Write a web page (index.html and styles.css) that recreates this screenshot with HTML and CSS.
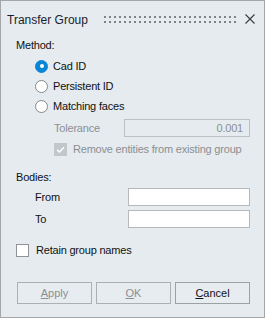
FILE: index.html
```html
<!DOCTYPE html>
<html>
<head>
<meta charset="utf-8">
<link rel="stylesheet" href="styles.css">
</head>
<body>
<div class="window">
  <div class="titlebar">
    <span class="title">Transfer Group</span>
    <svg class="grip" width="134" height="7" viewBox="0 0 134 7">
      <defs>
        <pattern id="dots" x="0" y="0" width="5" height="5" patternUnits="userSpaceOnUse">
          <rect x="0" y="0" width="2" height="2" fill="#7f8387"/>
        </pattern>
      </defs>
      <rect x="0" y="0" width="134" height="7" fill="url(#dots)"/>
    </svg>
    <svg class="close" width="10" height="10" viewBox="0 0 10 10">
      <path d="M0.5 0.5 L9.5 9.5 M9.5 0.5 L0.5 9.5" stroke="#3a3a3a" stroke-width="1.1" fill="none"/>
    </svg>
  </div>
  <div class="content">
    <div class="label method">Method:</div>
    <div class="radios">
      <div class="radio-row"><span class="radio checked"></span><span>Cad ID</span></div>
      <div class="radio-row"><span class="radio"></span><span>Persistent ID</span></div>
      <div class="radio-row"><span class="radio"></span><span>Matching faces</span></div>
    </div>
    <div class="field-row tol">
      <span class="dim">Tolerance</span>
      <div class="input tol-input dim">0.001</div>
    </div>
    <div class="check-row remove">
      <span class="check disabled">
        <svg width="13" height="13" viewBox="0 0 13 13"><path d="M3 6.8 L5.4 9.1 L10 4.2" stroke="#ffffff" stroke-width="1.4" fill="none"/></svg>
      </span>
      <span class="dim">Remove entities from existing group</span>
    </div>
    <div class="label bodies">Bodies:</div>
    <div class="field-row from">
      <span>From</span>
      <div class="input body-input"></div>
    </div>
    <div class="field-row to">
      <span>To</span>
      <div class="input body-input"></div>
    </div>
    <div class="check-row retain">
      <span class="check"></span>
      <span>Retain group names</span>
    </div>
    <div class="buttons">
      <div class="btn disabled"><u>A</u>pply</div>
      <div class="btn disabled"><u>O</u>K</div>
      <div class="btn primary"><u>C</u>ancel</div>
    </div>
  </div>
</div>
</body>
</html>
```

FILE: styles.css
```css
* { box-sizing: border-box; }
html, body { margin: 0; padding: 0; }
body {
  width: 265px;
  height: 318px;
  font-family: "Liberation Sans", Arial, sans-serif;
  font-size: 11px;
  letter-spacing: -0.2px;
  color: #111;
  background: #e5ebef;
}
.window {
  width: 265px;
  height: 318px;
  border: 1px solid #a4a7aa;
  background: #e5ebef;
  display: flex;
  flex-direction: column;
}
.titlebar {
  height: 36px;
  display: flex;
  align-items: flex-start;
  padding: 11px 9px 0 6px;
}
.title {
  font-size: 12px;
  letter-spacing: 0;
  line-height: 16px;
  color: #1c1c30;
}
.grip {
  display: block;
  margin-left: auto;
  margin-top: 4px;
}
.close {
  display: block;
  margin-left: 7px;
  margin-top: 2px;
}
.content {
  display: flex;
  flex-direction: column;
  padding: 0 14px 0 15px;
}
.label {
  line-height: 16px;
  height: 16px;
}
.radios {
  margin-top: 3px;
  padding-left: 19px;
  display: flex;
  flex-direction: column;
}
.radio-row {
  height: 20px;
  display: flex;
  align-items: center;
  gap: 5px;
}
.radio {
  width: 13px;
  height: 13px;
  border-radius: 50%;
  border: 1px solid #85898c;
  background: #ffffff;
  flex: none;
  position: relative;
}
.radio.checked {
  border-color: #0b86d6;
  background: #0b86d6;
}
.radio.checked::after {
  content: "";
  position: absolute;
  left: 3.5px;
  top: 3.5px;
  width: 4px;
  height: 4px;
  border-radius: 50%;
  background: #ffffff;
}
.field-row {
  height: 18px;
  display: flex;
  align-items: center;
}
.field-row.tol { margin-top: 3px; padding-left: 38px; }
.field-row.from { margin-top: 3px; padding-left: 19px; }
.field-row.to { margin-top: 4px; padding-left: 19px; }
.input {
  margin-left: auto;
  height: 18px;
  border: 1px solid #b5b9bc;
  background: #ffffff;
}
.tol-input {
  width: 126px;
  background: transparent;
  border-color: #bcc0c3;
  text-align: right;
  line-height: 16px;
  padding-right: 6px;
}
.body-input { width: 122px; }
.dim { color: #8b8f93; }
.check-row {
  height: 20px;
  display: flex;
  align-items: center;
}
.check-row.remove { margin-top: 2px; padding-left: 38px; gap: 6px; }
.check-row.retain { margin-top: 12px; gap: 7px; }
.check {
  width: 13px;
  height: 13px;
  border: 1px solid #8f9397;
  background: #ffffff;
  flex: none;
  display: block;
}
.check.disabled {
  border: none;
  background: #c2c7cb;
}
.check svg { display: block; }
.label.bodies { margin-top: 10px; }
.buttons {
  margin-top: 22px;
  padding-left: 1px;
  display: flex;
  gap: 4px;
}
.btn {
  flex: 1;
  height: 22px;
  border: 1px solid #acb0b3;
  background: #e7ecf0;
  text-align: center;
  line-height: 20px;
  letter-spacing: 0;
}
.btn.disabled { color: #8b8f93; }
.btn.primary { border-color: #9da1a4; color: #111; }
.btn u { text-underline-offset: 1px; }
```
